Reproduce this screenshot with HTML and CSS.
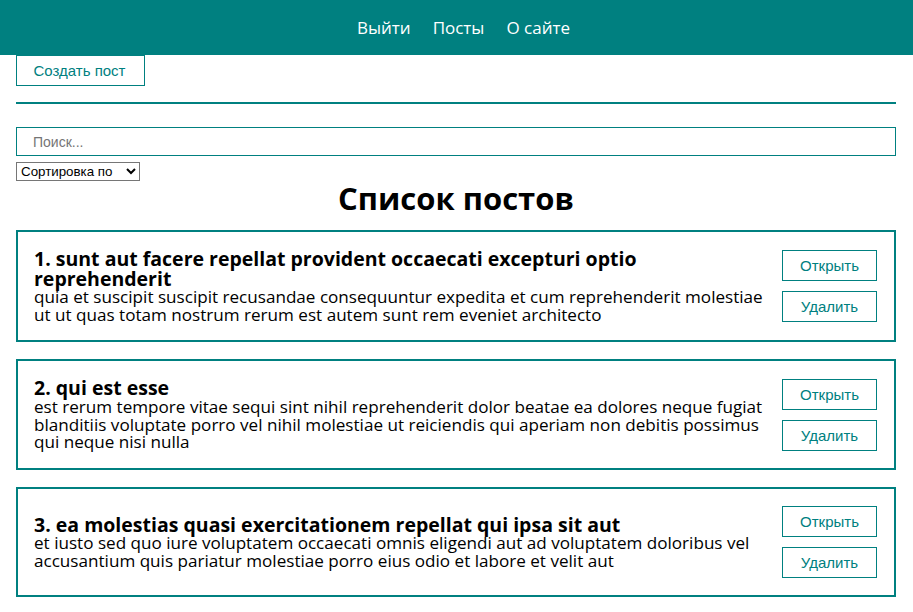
FILE: index.html
```html
<!DOCTYPE html>
<html lang="ru">
<head>
<meta charset="utf-8">
<title>Посты</title>
<link rel="stylesheet" href="styles.css">
</head>
<body>
<nav class="navbar">
  <div class="navbar__links">
    <a class="navbar__link" href="#">Выйти</a>
    <a class="navbar__link" href="#">Посты</a>
    <a class="navbar__link" href="#">О сайте</a>
  </div>
</nav>
<main class="app">
  <button class="btn btn--create">Создать пост</button>
  <hr class="divider">
  <input class="search" type="text" placeholder="Поиск...">
  <div class="sort-row">
    <select class="sort">
      <option>Сортировка по</option>
      <option>По названию</option>
      <option>По описанию</option>
    </select>
  </div>
  <h1 class="page-title">Список постов</h1>
  <div class="post-list">
    <article class="post">
      <div class="post__content">
        <strong class="post__title">1. sunt aut facere repellat provident occaecati excepturi optio reprehenderit</strong>
        <div class="post__body">quia et suscipit suscipit recusandae consequuntur expedita et cum reprehenderit molestiae ut ut quas totam nostrum rerum est autem sunt rem eveniet architecto</div>
      </div>
      <div class="post__btns">
        <button class="btn">Открыть</button>
        <button class="btn">Удалить</button>
      </div>
    </article>
    <article class="post">
      <div class="post__content">
        <strong class="post__title">2. qui est esse</strong>
        <div class="post__body">est rerum tempore vitae sequi sint nihil reprehenderit dolor beatae ea dolores neque fugiat blanditiis voluptate porro vel nihil molestiae ut reiciendis qui aperiam non debitis possimus qui neque nisi nulla</div>
      </div>
      <div class="post__btns">
        <button class="btn">Открыть</button>
        <button class="btn">Удалить</button>
      </div>
    </article>
    <article class="post">
      <div class="post__content">
        <strong class="post__title">3. ea molestias quasi exercitationem repellat qui ipsa sit aut</strong>
        <div class="post__body">et iusto sed quo iure voluptatem occaecati omnis eligendi aut ad voluptatem doloribus vel accusantium quis pariatur molestiae porro eius odio et labore et velit aut</div>
      </div>
      <div class="post__btns">
        <button class="btn">Открыть</button>
        <button class="btn">Удалить</button>
      </div>
    </article>
  </div>
</main>
</body>
</html>
```
FILE: styles.css
```css
* {
  box-sizing: border-box;
}

body {
  margin: 0;
  font-family: "Open Sans", "Noto Sans", sans-serif;
  color: #000;
  background: #fff;
}

.navbar {
  height: 55px;
  background: #008080;
  display: flex;
  align-items: center;
  justify-content: center;
  padding-left: 14px;
}

.navbar__links {
  display: flex;
  gap: 22px;
}

.navbar__link {
  color: #fff;
  text-decoration: none;
  font-size: 17px;
  font-weight: 500;
}

.app {
  padding: 0 17px 0 16px;
}

.btn {
  display: block;
  height: 31px;
  padding: 0 16px;
  border: 1px solid #008080;
  background: #fff;
  color: #008080;
  font-family: "Liberation Sans", Arial, sans-serif;
  font-size: 15px;
  cursor: pointer;
}

.btn--create {
  width: 129px;
  padding: 0 14px 0 12px;
}

.divider {
  margin: 16px 0 0;
  border: none;
  height: 2px;
  background: #008080;
}

.search {
  display: block;
  width: 100%;
  height: 29px;
  margin-top: 23px;
  padding: 0 16px;
  border: 1px solid #008080;
  font-family: "Liberation Sans", Arial, sans-serif;
  font-size: 14px;
  outline: none;
}

.search::placeholder {
  color: #757575;
}

.sort-row {
  display: flex;
  margin-top: 6px;
}

.sort {
  width: 124px;
  height: 19px;
  font-family: "Liberation Sans", Arial, sans-serif;
  font-size: 13.33px;
  color: #000;
  background: #fff;
  border: 1px solid #767676;
  border-radius: 0;
}

.page-title {
  margin: 1px 0 15px;
  text-align: center;
  font-size: 31px;
  line-height: 33px;
  font-weight: 700;
}

.post-list {
  display: flex;
  flex-direction: column;
  gap: 17px;
}

.post {
  display: flex;
  align-items: center;
  border: 2px solid #008080;
  padding: 17px 17px 17px 16px;
}

.post__content {
  flex: 1;
  margin-right: 18px;
}

.post__title {
  display: block;
  font-size: 19.5px;
  line-height: 19.5px;
  font-weight: 700;
}

.post__body {
  font-size: 17.1px;
  line-height: 17.7px;
}

.post__btns {
  display: flex;
  flex-direction: column;
  gap: 10px;
  width: 95px;
  flex-shrink: 0;
}

.post__btns .btn {
  width: 95px;
}
```
